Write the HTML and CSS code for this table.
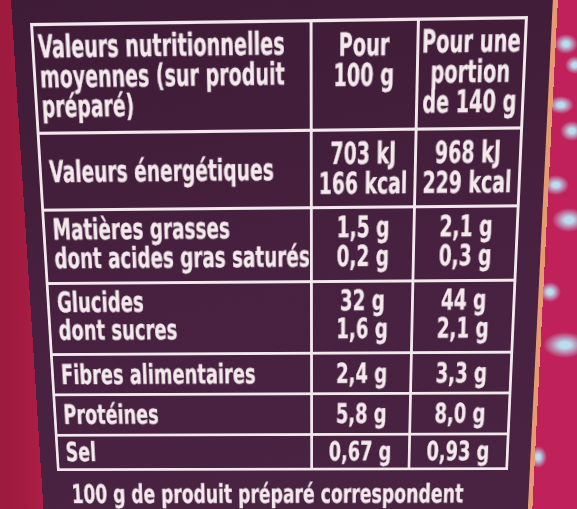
FILE: index.html
```html
<!DOCTYPE html>
<html lang="fr">
<head>
<meta charset="utf-8">
<title>Valeurs nutritionnelles</title>
<link rel="stylesheet" href="styles.css">
</head>
<body>
<div class="panel">
  <div class="table">
    <div class="cell label head"><span>Valeurs nutritionnelles<br>moyennes (sur produit<br>préparé)</span></div>
    <div class="cell val head c2"><span>Pour<br>100 g</span></div>
    <div class="cell val head c3"><span>Pour une<br>portion<br>de 140 g</span></div>

    <div class="cell label row"><span>Valeurs énergétiques</span></div>
    <div class="cell val row"><span>703 kJ<br>166 kcal</span></div>
    <div class="cell val row"><span>968 kJ<br>229 kcal</span></div>

    <div class="cell label row up"><span>Matières grasses<br>dont acides gras saturés</span></div>
    <div class="cell val row up"><span>1,5 g<br>0,2 g</span></div>
    <div class="cell val row up"><span>2,1 g<br>0,3 g</span></div>

    <div class="cell label row up"><span>Glucides<br>dont sucres</span></div>
    <div class="cell val row up"><span>32 g<br>1,6 g</span></div>
    <div class="cell val row up"><span>44 g<br>2,1 g</span></div>

    <div class="cell label row"><span>Fibres alimentaires</span></div>
    <div class="cell val row"><span>2,4 g</span></div>
    <div class="cell val row"><span>3,3 g</span></div>

    <div class="cell label row"><span>Protéines</span></div>
    <div class="cell val row"><span>5,8 g</span></div>
    <div class="cell val row"><span>8,0 g</span></div>

    <div class="cell label row"><span>Sel</span></div>
    <div class="cell val row"><span>0,67 g</span></div>
    <div class="cell val row"><span>0,93 g</span></div>
  </div>
  <p class="note"><span>100 g de produit préparé correspondent</span></p>
</div>
</body>
</html>
```

FILE: styles.css
```css
html, body {
  margin: 0;
  height: 100%;
  overflow: hidden;
}

body {
  font-family: "DejaVu Sans Condensed", "DejaVu Sans", sans-serif;
  font-weight: 700;
  color: #f3eaec;
  background:
    radial-gradient(ellipse 12px 10px at 566px 44px, #b9dcef 25%, rgba(185,220,239,0) 100%),
    radial-gradient(ellipse 10px 9px at 575px 65px, #b9dcef 25%, rgba(185,220,239,0) 100%),
    radial-gradient(ellipse 13px 9px at 561px 105px, #b9dcef 25%, rgba(185,220,239,0) 100%),
    radial-gradient(ellipse 12px 10px at 572px 131px, #b9dcef 25%, rgba(185,220,239,0) 100%),
    radial-gradient(ellipse 13px 10px at 556px 185px, #b9dcef 25%, rgba(185,220,239,0) 100%),
    radial-gradient(ellipse 17px 12px at 569px 220px, #b9dcef 25%, rgba(185,220,239,0) 100%),
    radial-gradient(ellipse 11px 10px at 550px 292px, #b9dcef 25%, rgba(185,220,239,0) 100%),
    radial-gradient(ellipse 22px 13px at 565px 345px, #b9dcef 25%, rgba(185,220,239,0) 100%),
    radial-gradient(ellipse 9px 11px at 538px 457px, #b9dcef 25%, rgba(185,220,239,0) 100%),
    linear-gradient(90deg, #9c1a3c 0px, #a61c42 30px, #bb2152 60px, #c0215a 100%);
}

.panel {
  box-sizing: border-box;
  width: 550px;
  padding: 30px 24px 80px 18px;
  background: linear-gradient(170deg, #3e1b36 0%, #47213f 45%, #4b2444 100%);
  border-right: 5px solid #e59a72;
  transform-origin: 0 0;
  transform: matrix3d(0.976425, -0.014330, 0, -0.00002582,
                      0.072642, 1.096718, 0, 0.00022878,
                      0, 0, 1, 0,
                      10.2450, -9.6436, 0, 0.9936014);
}

.table {
  box-sizing: border-box;
  width: 503px;
  display: grid;
  grid-template-columns: 281px 108px 108px;
  grid-template-rows: 99px 75px 74px 74px 43px 44px 38px;
  border: 3px solid #f1e8ec;
}

.cell {
  box-sizing: border-box;
  display: flex;
  flex-direction: column;
  justify-content: center;
  font-size: 29px;
  line-height: 29px;
  white-space: nowrap;
}

.cell > span,
.note > span {
  display: inline-block;
  transform: scaleX(0.75);
  -webkit-text-stroke: 0.5px #f3eaec;
}

.row {
  border-top: 3px solid #f1e8ec;
}

.up {
  padding-bottom: 6px;
}

.val {
  border-left: 3px solid #f1e8ec;
  align-items: center;
  text-align: center;
}

.val > span {
  transform-origin: 50% 50%;
}

.label {
  align-items: flex-start;
  padding-left: 8px;
}

.label > span {
  transform-origin: 0 50%;
}

.head {
  justify-content: flex-start;
  line-height: 28px;
  padding-top: 5px;
}

.label.head {
  padding-left: 4px;
}

.head.c2 {
  padding-top: 7px;
}

.head.c3 {
  padding-top: 5px;
}

.note {
  margin: 12px 0 0 15px;
  font-size: 29px;
  line-height: 29px;
  white-space: nowrap;
}

.note > span {
  transform: scaleX(0.74);
  transform-origin: 0 50%;
}
```
